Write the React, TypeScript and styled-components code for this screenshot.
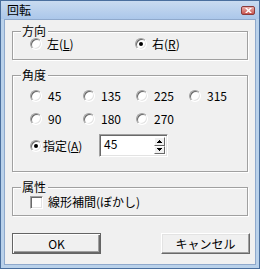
import React from 'react'
import styled, { createGlobalStyle } from 'styled-components'

const GlobalStyle = createGlobalStyle`
  html, body {
    margin: 0;
    padding: 0;
    background: #ffffff;
  }
  body {
    font-family: "Noto Sans CJK JP", "Liberation Sans", sans-serif;
    font-size: 12px;
    color: #000;
  }
`

const Frame = styled.div`
  width: 260px;
  height: 269px;
  box-sizing: border-box;
  border: 1px solid #4a6f9e;
  background: #b9d1ea;
  display: flex;
  flex-direction: column;
  padding: 0 3px 3px 3px;
`

const TitleBar = styled.div`
  height: 18px;
  flex: none;
  display: flex;
  align-items: center;
  justify-content: space-between;
  margin: 0 -3px;
  padding: 0 4px 0 6px;
  background: linear-gradient(#c9dbf0, #abc7ea);
`

const TitleText = styled.span`
  font-size: 12px;
  line-height: 12px;
`

const CloseButton = styled.div`
  width: 12px;
  height: 7px;
  display: flex;
  align-items: center;
  justify-content: center;
  border: 1px solid #8a3b3b;
  border-radius: 2px;
  background: linear-gradient(#eab0ac, #c9544f);
`

const Client = styled.div`
  flex: 1;
  background: #f0f0f0;
  border: 1px solid #8fa9cc;
  display: flex;
  flex-direction: column;
  padding: 0 7px;
`

const Group = styled.div<{ $top: number; $pb: number }>`
  margin-top: ${(p) => p.$top}px;
  padding: 0 0 ${(p) => p.$pb}px 17px;
  border: 1px solid #a0a0a0;
  box-shadow: inset 1px 1px #fff, 1px 1px #fff;
  display: flex;
  flex-direction: column;
`

const Legend = styled.span`
  align-self: flex-start;
  margin: -7px 0 0 -9px;
  padding: 0 2px 0 1px;
  font-size: 12px;
  line-height: 12px;
  height: 12px;
  background: #f0f0f0;
`

const Grid = styled.div<{ $cols: string }>`
  display: grid;
  grid-template-columns: ${(p) => p.$cols};
`

const Row = styled.div<{ $mt: number; $h?: number }>`
  display: flex;
  align-items: center;
  margin-top: ${(p) => p.$mt}px;
  height: ${(p) => p.$h ?? 14}px;
`

const Option = styled.label<{ $gap?: number; $w?: number }>`
  display: flex;
  align-items: center;
  gap: ${(p) => p.$gap ?? 5}px;
  width: ${(p) => (p.$w ? `${p.$w}px` : 'auto')};
  flex: none;
  line-height: 14px;
  white-space: nowrap;
`

const RadioCircle = styled.span<{ $on?: boolean }>`
  position: relative;
  width: 12px;
  height: 12px;
  box-sizing: border-box;
  border-radius: 50%;
  border: 1px solid;
  border-color: #a0a0a0 #ffffff #ffffff #a0a0a0;
  background: #ffffff;
  box-shadow: inset 1px 1px #696969, inset -1px -1px #e3e3e3;
  flex: none;
  &::after {
    content: '';
    display: ${(p) => (p.$on ? 'block' : 'none')};
    position: absolute;
    left: 3px;
    top: 3px;
    width: 4px;
    height: 4px;
    border-radius: 50%;
    background: #000;
  }
`

const CheckSquare = styled.span`
  width: 13px;
  height: 13px;
  box-sizing: border-box;
  border: 1px solid;
  border-color: #a0a0a0 #ffffff #ffffff #a0a0a0;
  background: #fff;
  box-shadow: inset 1px 1px #696969, inset -1px -1px #e3e3e3;
  flex: none;
`

const SpinEdit = styled.div`
  width: 69px;
  height: 23px;
  box-sizing: border-box;
  border: 1px solid;
  border-color: #a0a0a0 #ffffff #ffffff #a0a0a0;
  box-shadow: inset 1px 1px #696969, inset -1px -1px #e3e3e3;
  background: #fff;
  display: flex;
  padding: 2px 2px 2px 4px;
`

const SpinValue = styled.span`
  flex: 1;
  line-height: 14px;
`

const SpinButtons = styled.div`
  width: 11px;
  display: flex;
  flex-direction: column;
`

const SpinButton = styled.div`
  flex: 1;
  background: #f0f0f0;
  border: 1px solid;
  border-color: #fff #696969 #696969 #fff;
  display: flex;
  align-items: center;
  justify-content: center;
`

const Buttons = styled.div`
  display: flex;
  justify-content: space-between;
  margin: 17px -2px 0 0;
`

const Button = styled.div<{ $default?: boolean }>`
  width: 89px;
  height: 21px;
  box-sizing: border-box;
  display: flex;
  align-items: center;
  justify-content: center;
  background: #f0f0f0;
  border: 1px solid;
  border-color: ${(p) => (p.$default ? '#646464' : '#ffffff #696969 #696969 #ffffff')};
  box-shadow: ${(p) =>
    p.$default
      ? 'inset 1px 1px #fff, inset -1px -1px #696969, inset -2px -2px #a0a0a0'
      : 'inset -1px -1px #a0a0a0, inset 1px 1px #e3e3e3'};
  line-height: 14px;
`

const Arrow = ({ up }: { up?: boolean }) => (
  <svg width='5' height='3' viewBox='0 0 5 3'>
    <path d={up ? 'M2 0h1v1h1v1h1v1H0V2h1V1h1z' : 'M0 0h5v1H4v1H3v1H2V2H1V1H0z'} fill='#000' />
  </svg>
)

const App: React.FC = () => {
  return (
    <>
      <GlobalStyle />
      <Frame>
        <TitleBar>
          <TitleText>回転</TitleText>
          <CloseButton>
            <svg width='7' height='5' viewBox='0 0 7 5'>
              <path d='M0 0h2l1.5 1.5L5 0h2L4.5 2.5 7 5H5L3.5 3.5 2 5H0l2.5-2.5z' fill='#fff' />
            </svg>
          </CloseButton>
        </TitleBar>
        <Client>
          <Group $top={11} $pb={8}>
            <Legend>方向</Legend>
            <Row $mt={0}>
              <Grid $cols='105px 100px'>
                <Option>
                  <RadioCircle />
                  <span>左(<u>L</u>)</span>
                </Option>
                <Option>
                  <RadioCircle $on />
                  <span>右(<u>R</u>)</span>
                </Option>
              </Grid>
            </Row>
          </Group>

          <Group $top={15} $pb={14}>
            <Legend>角度</Legend>
            <Grid $cols='53px 53px 53px 53px'>
              {['45', '135', '225', '315'].map((v) => (
                <Row $mt={8} key={v}>
                  <Option $gap={6}>
                    <RadioCircle />
                    <span>{v}</span>
                  </Option>
                </Row>
              ))}
              {['90', '180', '270'].map((v) => (
                <Row $mt={9} key={v}>
                  <Option $gap={6}>
                    <RadioCircle />
                    <span>{v}</span>
                  </Option>
                </Row>
              ))}
            </Grid>
            <Row $mt={8} $h={23}>
              <Option $gap={1} $w={69}>
                <RadioCircle $on />
                <span>指定(<u>A</u>)</span>
              </Option>
              <SpinEdit>
                <SpinValue>45</SpinValue>
                <SpinButtons>
                  <SpinButton>
                    <Arrow up />
                  </SpinButton>
                  <SpinButton>
                    <Arrow />
                  </SpinButton>
                </SpinButtons>
              </SpinEdit>
            </Row>
          </Group>

          <Group $top={15} $pb={6}>
            <Legend>属性</Legend>
            <Row $mt={2}>
              <Option $gap={5}>
                <CheckSquare />
                <span>線形補間(ぼかし)</span>
              </Option>
            </Row>
          </Group>

          <Buttons>
            <Button $default>OK</Button>
            <Button>キャンセル</Button>
          </Buttons>
        </Client>
      </Frame>
    </>
  )
}

export default App
